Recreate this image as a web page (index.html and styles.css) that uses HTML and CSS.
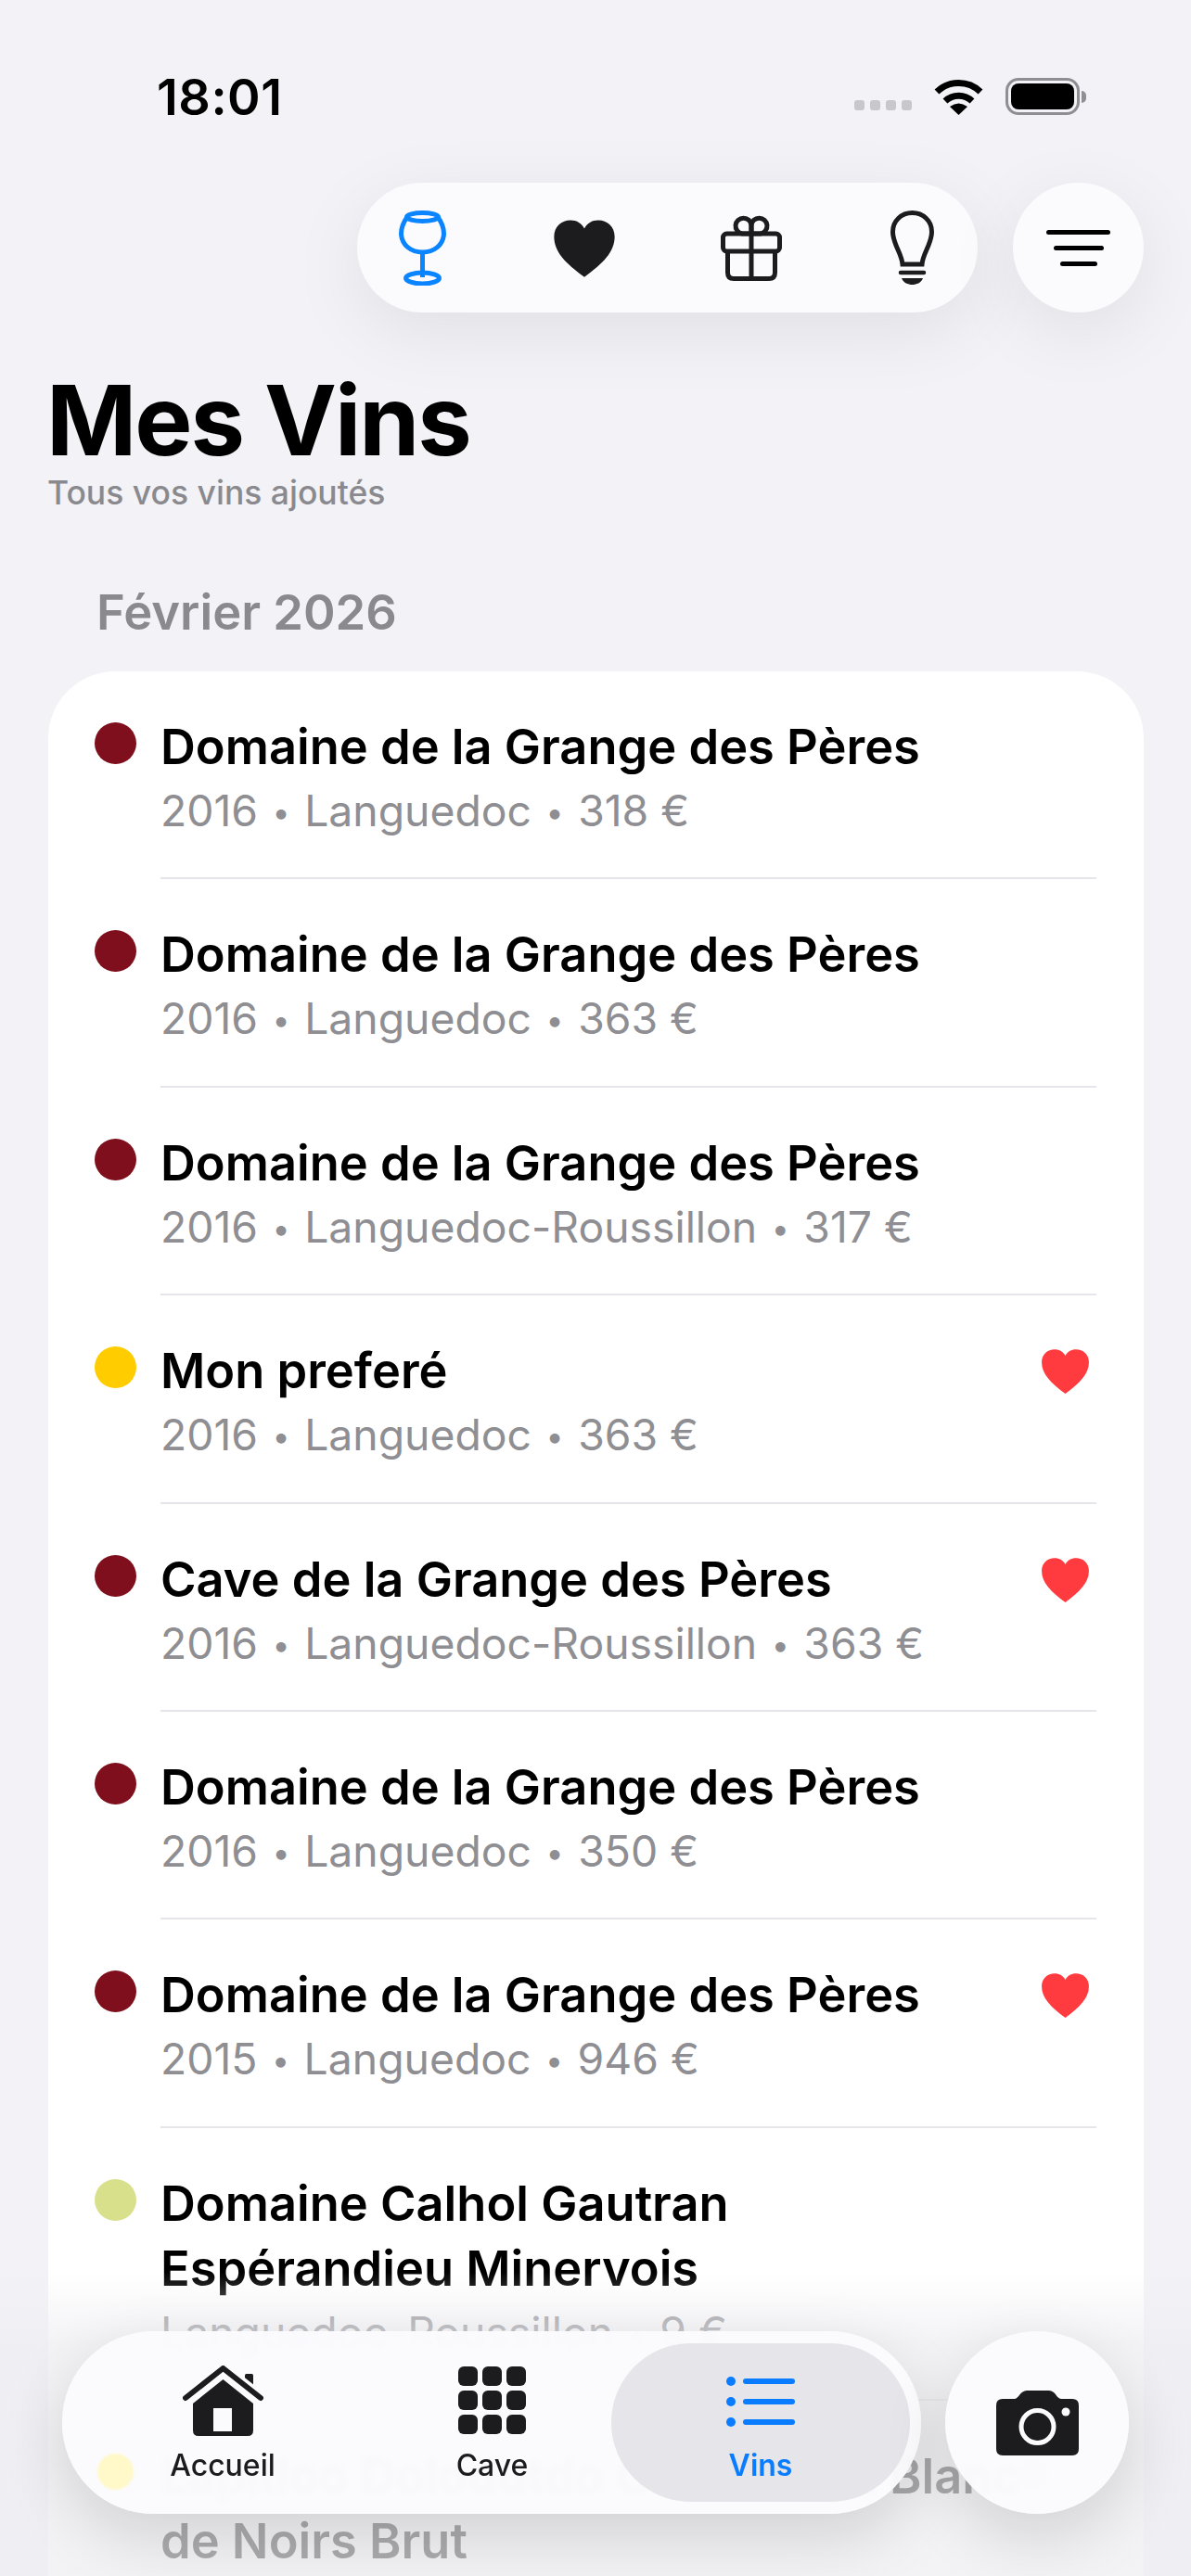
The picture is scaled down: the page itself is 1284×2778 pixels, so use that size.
FILE: index.html
```html
<!DOCTYPE html>
<html lang="fr">
    <head>
        <meta charset="UTF-8">
        <title>Mes Vins</title>
        <link rel="stylesheet" href="styles.css">
    </head>
    <body>
        <div class="status">
            <span class="time">18:01</span>
            <div class="status-icons">
                <div class="signal"><i></i><i></i><i></i><i></i></div>
                <svg class="wifi" viewBox="0 0 53 39">
                    <path d="M3 14A34 34 0 0 1 50 14" fill="none" stroke="#000" stroke-width="7"/>
                    <path d="M12 24A21 21 0 0 1 41 24" fill="none" stroke="#000" stroke-width="7"/>
                    <path d="M26.500 39L17 30Q26.500 23 36 30Z"/>
                </svg>
                <div class="battery"><div class="battery-level"></div></div>
                <div class="battery-cap"></div>
            </div>
        </div>

        <div class="toolbar">
            <div class="filters">
                <svg class="icon-glass" viewBox="0 0 51 81" fill="none" stroke="#0a84ff" stroke-width="5">
                    <ellipse cx="25.500" cy="7" rx="17" ry="4.500"/>
                    <path d="M9 7C4 14 2.500 19 2.500 25C3 38 14 45 25.500 45C37 45 48 38 48.500 25C48.500 19 47 14 42 7"/>
                    <path d="M25.500 45V72"/>
                    <ellipse cx="25.500" cy="73" rx="18" ry="6"/>
                </svg>
                <svg class="icon-heart" viewBox="0 0 100 92"><path d="M50 92C20 70 2 52 2 28C2 12 14 2 28 2C38 2 46 7 50 15C54 7 62 2 72 2C86 2 98 12 98 28C98 52 80 70 50 92Z"/></svg>
                <svg class="icon-gift" viewBox="0 0 66 71" fill="none" stroke="#1c1c1e" stroke-width="5">
                    <rect x="2.500" y="20" width="61" height="19" rx="4"/>
                    <path d="M7.500 39V62Q7.500 68.500 14 68.500H52Q58.500 68.500 58.500 62V39"/>
                    <path d="M33 20V68"/>
                    <path d="M33 20H23A8.500 8.500 0 1 1 33 11Z"/>
                    <path d="M33 20H43A8.500 8.500 0 1 0 33 11Z"/>
                </svg>
                <svg class="icon-bulb" viewBox="0 0 47 80">
                    <path d="M13 58C12 46 2.500 36 2.500 23C2.500 11 12 2.500 23.500 2.500C35 2.500 44.500 11 44.500 23C44.500 36 35 46 34 58Z" fill="none" stroke="#1c1c1e" stroke-width="5"/>
                    <path d="M11 67H36" stroke="#1c1c1e" stroke-width="4.500" stroke-linecap="round"/>
                    <path d="M12 73H35C33 78 28 80 23.500 80C19 80 14 78 12 73Z" fill="#1c1c1e"/>
                </svg>
            </div>
            <div class="round-btn">
                <div class="sort-lines"><i></i><i></i><i></i></div>
            </div>
        </div>

        <h1 class="page-title">Mes Vins</h1>
        <p class="page-sub">Tous vos vins ajoutés</p>
        <h2 class="month">Février 2026</h2>

        <div class="card">
            <div class="row">
                <span class="dot red"></span>
                <div class="row-body">
                    <div class="row-text">
                        <div class="wine">Domaine de la Grange des Pères</div>
                        <div class="meta">2016 <b>•</b> Languedoc <b>•</b> 318 €</div>
                    </div>
                </div>
            </div>
            <div class="row">
                <span class="dot red"></span>
                <div class="row-body">
                    <div class="row-text">
                        <div class="wine">Domaine de la Grange des Pères</div>
                        <div class="meta">2016 <b>•</b> Languedoc <b>•</b> 363 €</div>
                    </div>
                </div>
            </div>
            <div class="row">
                <span class="dot red"></span>
                <div class="row-body">
                    <div class="row-text">
                        <div class="wine">Domaine de la Grange des Pères</div>
                        <div class="meta">2016 <b>•</b> Languedoc-Roussillon <b>•</b> 317 €</div>
                    </div>
                </div>
            </div>
            <div class="row">
                <span class="dot gold"></span>
                <div class="row-body">
                    <div class="row-text">
                        <div class="wine">Mon preferé</div>
                        <div class="meta">2016 <b>•</b> Languedoc <b>•</b> 363 €</div>
                    </div>
                    <svg class="fav" viewBox="0 0 100 92"><path d="M50 92C20 70 2 52 2 28C2 12 14 2 28 2C38 2 46 7 50 15C54 7 62 2 72 2C86 2 98 12 98 28C98 52 80 70 50 92Z"/></svg>
                </div>
            </div>
            <div class="row">
                <span class="dot red"></span>
                <div class="row-body">
                    <div class="row-text">
                        <div class="wine">Cave de la Grange des Pères</div>
                        <div class="meta">2016 <b>•</b> Languedoc-Roussillon <b>•</b> 363 €</div>
                    </div>
                    <svg class="fav" viewBox="0 0 100 92"><path d="M50 92C20 70 2 52 2 28C2 12 14 2 28 2C38 2 46 7 50 15C54 7 62 2 72 2C86 2 98 12 98 28C98 52 80 70 50 92Z"/></svg>
                </div>
            </div>
            <div class="row">
                <span class="dot red"></span>
                <div class="row-body">
                    <div class="row-text">
                        <div class="wine">Domaine de la Grange des Pères</div>
                        <div class="meta">2016 <b>•</b> Languedoc <b>•</b> 350 €</div>
                    </div>
                </div>
            </div>
            <div class="row">
                <span class="dot red"></span>
                <div class="row-body">
                    <div class="row-text">
                        <div class="wine">Domaine de la Grange des Pères</div>
                        <div class="meta">2015 <b>•</b> Languedoc <b>•</b> 946 €</div>
                    </div>
                    <svg class="fav" viewBox="0 0 100 92"><path d="M50 92C20 70 2 52 2 28C2 12 14 2 28 2C38 2 46 7 50 15C54 7 62 2 72 2C86 2 98 12 98 28C98 52 80 70 50 92Z"/></svg>
                </div>
            </div>
            <div class="row">
                <span class="dot green"></span>
                <div class="row-body">
                    <div class="row-text">
                        <div class="wine">Domaine Calhol Gautran<br>Espérandieu Minervois</div>
                        <div class="meta">Languedoc-Roussillon <b>•</b> 9 €</div>
                    </div>
                </div>
            </div>
            <div class="row">
                <span class="dot pale"></span>
                <div class="row-body">
                    <div class="row-text">
                        <div class="wine nowrap">Lapitloo Dolodutdo Cuvée Brut Blanc<br>de Noirs Brut</div>
                    </div>
                    <span class="ghost-mark"></span>
                </div>
            </div>
        </div>

        <!-- fade of the list under the floating bar -->
        <div class="fade"></div>

        <div class="tabbar">
            <div class="tabs">
                <div class="tab">
                    <svg class="tab-home" viewBox="0 0 87 77">
                        <rect x="67" y="9" width="9" height="20" rx="1.500" fill="#1c1c1e"/>
                        <path d="M3 35L43.500 3L84 35" fill="none" stroke="#fbfbfe" stroke-width="13" stroke-linecap="round" stroke-linejoin="round"/>
                        <path d="M3 35L43.500 3L84 35" fill="none" stroke="#1c1c1e" stroke-width="6" stroke-linecap="round" stroke-linejoin="round"/>
                        <path fill-rule="evenodd" d="M43.500 15L11 41V70Q11 76 17 76H70Q76 76 76 70V41ZM33 46H53V71H33Z" fill="#1c1c1e"/>
                    </svg>
                    <span>Accueil</span>
                </div>
                <div class="tab">
                    <div class="tab-grid"><i></i><i></i><i></i><i></i><i></i><i></i><i></i><i></i><i></i></div>
                    <span>Cave</span>
                </div>
                <div class="tab active">
                    <svg class="tab-list" viewBox="0 0 74 54">
                        <circle cx="5" cy="5" r="5"/><circle cx="5" cy="27" r="5"/><circle cx="5" cy="49" r="5"/>
                        <rect x="18" y="2" width="56" height="6" rx="3"/><rect x="18" y="24" width="56" height="6" rx="3"/><rect x="18" y="46" width="56" height="6" rx="3"/>
                    </svg>
                    <span>Vins</span>
                </div>
            </div>
            <div class="camera">
                <svg viewBox="0 0 89 70">
                    <path d="M7 9H20C24 9 26 0 33 0H57C64 0 65 9 70 9H82Q89 9 89 16V63Q89 70 82 70H7Q0 70 0 63V16Q0 9 7 9Z" fill="#1c1c1e"/>
                    <circle cx="44.500" cy="39" r="17.500" fill="none" stroke="#fbfbfe" stroke-width="5"/>
                    <circle cx="75" cy="23" r="4.500" fill="#fbfbfe"/>
                </svg>
            </div>
        </div>
    </body>
</html>
```

FILE: styles.css
```css
* {
    box-sizing: border-box;
}
body {
    margin: 0;
    height: 2778px;
    overflow: hidden;
    position: relative;
    background-color: #f2f2f7;
    font-family: 'Inter', 'Liberation Sans', sans-serif;
    color: #000;
}

/* status bar */
.status {
    display: flex;
    justify-content: space-between;
    align-items: center;
    height: 60px;
    margin-top: 74px;
    padding: 0 113px 0 169px;
}
.time {
    font-size: 54px;
    font-weight: 600;
    letter-spacing: 0.5px;
}
.status-icons {
    display: flex;
    align-items: center;
}
.signal {
    display: flex;
    gap: 6px;
    margin: 18px 24px 0 0;
}
.signal i {
    width: 11px;
    height: 11px;
    border-radius: 3px;
    background-color: #c7c7cc;
}
.wifi {
    width: 53px;
    height: 39px;
    margin-right: 24px;
}
.battery {
    width: 80px;
    height: 40px;
    padding: 3px;
    border: 3px solid #8e8e93;
    border-radius: 14px;
}
.battery-level {
    height: 100%;
    background-color: #000;
    border-radius: 8px;
}
.battery-cap {
    width: 5px;
    height: 13px;
    margin-left: 2px;
    background-color: #8e8e93;
    border-radius: 0 6px 6px 0;
}

/* top filters */
.toolbar {
    display: flex;
    justify-content: flex-end;
    gap: 38px;
    margin-top: 63px;
    padding-right: 51px;
}
.filters {
    display: flex;
    align-items: center;
    width: 669px;
    height: 140px;
    padding: 0 47px 0 45px;
    justify-content: space-between;
    background-color: #fbfbfe;
    border-radius: 70px;
    box-shadow: 0 20px 80px rgba(0, 0, 0, 0.08);
}
.icon-glass {
    width: 51px;
    height: 81px;
}
.icon-heart {
    width: 68px;
    height: 63px;
    margin-left: -2px;
    fill: #1c1c1e;
}
.icon-gift {
    width: 66px;
    height: 71px;
    margin-left: -3px;
}
.icon-bulb {
    width: 47px;
    height: 80px;
}
.round-btn {
    display: flex;
    align-items: center;
    justify-content: center;
    width: 141px;
    height: 140px;
    background-color: #fbfbfe;
    border-radius: 50%;
    box-shadow: 0 20px 80px rgba(0, 0, 0, 0.08);
}
.sort-lines {
    display: flex;
    flex-direction: column;
    align-items: center;
    gap: 12px;
}
.sort-lines i {
    display: block;
    height: 5px;
    width: 69px;
    border-radius: 3px;
    background-color: #000;
}
.sort-lines i:nth-child(2) {
    width: 54px;
}
.sort-lines i:nth-child(3) {
    width: 40px;
}

/* headings */
.page-title {
    margin: 57px 0 0 50px;
    font-size: 104.500px;
    line-height: 118px;
    font-weight: 700;
    letter-spacing: -2px;
}
.page-sub {
    margin: 0 0 0 51px;
    font-size: 35.500px;
    line-height: 40px;
    font-weight: 500;
    color: #8a8a8e;
}
.month {
    margin: 75px 0 0 104px;
    font-size: 52.500px;
    line-height: 66px;
    font-weight: 600;
    color: #8a8a8e;
}

/* wine list */
.card {
    margin: 31px 51px 0 52px;
    padding-left: 50px;
    background-color: #fff;
    border-radius: 72px 72px 0 0;
}
.row {
    display: flex;
    gap: 26px;
}
.dot {
    flex: none;
    width: 45px;
    height: 45px;
    margin-top: 55px;
    border-radius: 50%;
}
.dot.red {
    background-color: #7f0f1c;
}
.dot.gold {
    background-color: #ffcc00;
}
.dot.green {
    background-color: #d8e08c;
}
/* seen through the floating bar, so it sits above it */
.dot.pale {
    position: relative;
    z-index: 3;
    width: 39px;
    height: 39px;
    margin: 57px 3px 0;
    background-color: #fff8c8;
    filter: blur(1px);
}
.row-body {
    flex: 1;
    display: flex;
    justify-content: space-between;
    margin-right: 51px;
    padding: 46px 7px 38.400px 0;
    border-bottom: 2px solid #e5e5ea;
}
.row:last-child .row-body {
    border-bottom: none;
}
.row-text {
    flex: 1;
    min-width: 0;
}
.wine {
    font-size: 52.400px;
    line-height: 70px;
    font-weight: 600;
}
.wine.nowrap {
    white-space: nowrap;
}
.meta {
    font-size: 46.300px;
    line-height: 68px;
    color: #8e8e93;
}
.meta b {
    font-weight: 400;
    font-size: 34px;
    line-height: 0;
    vertical-align: 3px;
    margin: 0 2.500px;
}
.fav {
    flex: none;
    width: 53px;
    height: 49px;
    margin-top: 11px;
    fill: #ff3b3f;
}
.ghost-mark {
    flex: none;
    width: 28px;
    height: 28px;
    margin: 19px 68px 0 0;
    border-radius: 50%;
    background-color: #8e8e93;
    filter: blur(5px);
}
.fade {
    position: absolute;
    left: 0;
    right: 0;
    top: 2450px;
    height: 328px;
    background: linear-gradient(rgba(238, 238, 242, 0), rgba(238, 238, 242, 0.7) 24%, rgba(238, 238, 242, 0.72) 100%);
}

/* floating tab bar */
.tabbar {
    position: absolute;
    z-index: 2;
    left: 67px;
    top: 2514px;
    display: flex;
    gap: 26px;
}
.tabs {
    display: flex;
    align-items: center;
    width: 926px;
    height: 197px;
    padding: 0 12px 0 43px;
    background-color: rgba(251, 251, 254, 0.96);
    backdrop-filter: blur(3px);
    border-radius: 98px;
    box-shadow: 0 24px 70px rgba(0, 0, 0, 0.14);
}
.tab {
    flex: none;
    display: flex;
    flex-direction: column;
    align-items: center;
    justify-content: flex-end;
    width: 260px;
    height: 171px;
    padding-bottom: 21px;
    font-size: 32px;
    line-height: 36px;
    font-weight: 500;
    color: #1c1c1e;
}
.tab span {
    margin-top: 13px;
}
.tab:nth-child(2) {
    width: 321px;
}
.tab.active {
    width: 322px;
    margin-left: -32px;
    border-radius: 86px;
    background-color: #e5e5ea;
    color: #0a7cff;
    font-weight: 600;
}
.tab-home {
    width: 87px;
    height: 77px;
}
.tab-grid {
    display: grid;
    grid-template-columns: repeat(3, 21px);
    gap: 5px;
    margin-bottom: 3px;
}
.tab-grid i {
    height: 21px;
    border-radius: 6px;
    background-color: #1c1c1e;
}
.tab-list {
    width: 74px;
    height: 54px;
    margin-bottom: 11px;
    fill: #0a7cff;
}
.camera {
    display: flex;
    align-items: center;
    justify-content: center;
    width: 198px;
    height: 197px;
    background-color: rgba(251, 251, 254, 0.96);
    backdrop-filter: blur(3px);
    border-radius: 50%;
    box-shadow: 0 24px 70px rgba(0, 0, 0, 0.14);
}
.camera svg {
    width: 89px;
    height: 70px;
}
```
